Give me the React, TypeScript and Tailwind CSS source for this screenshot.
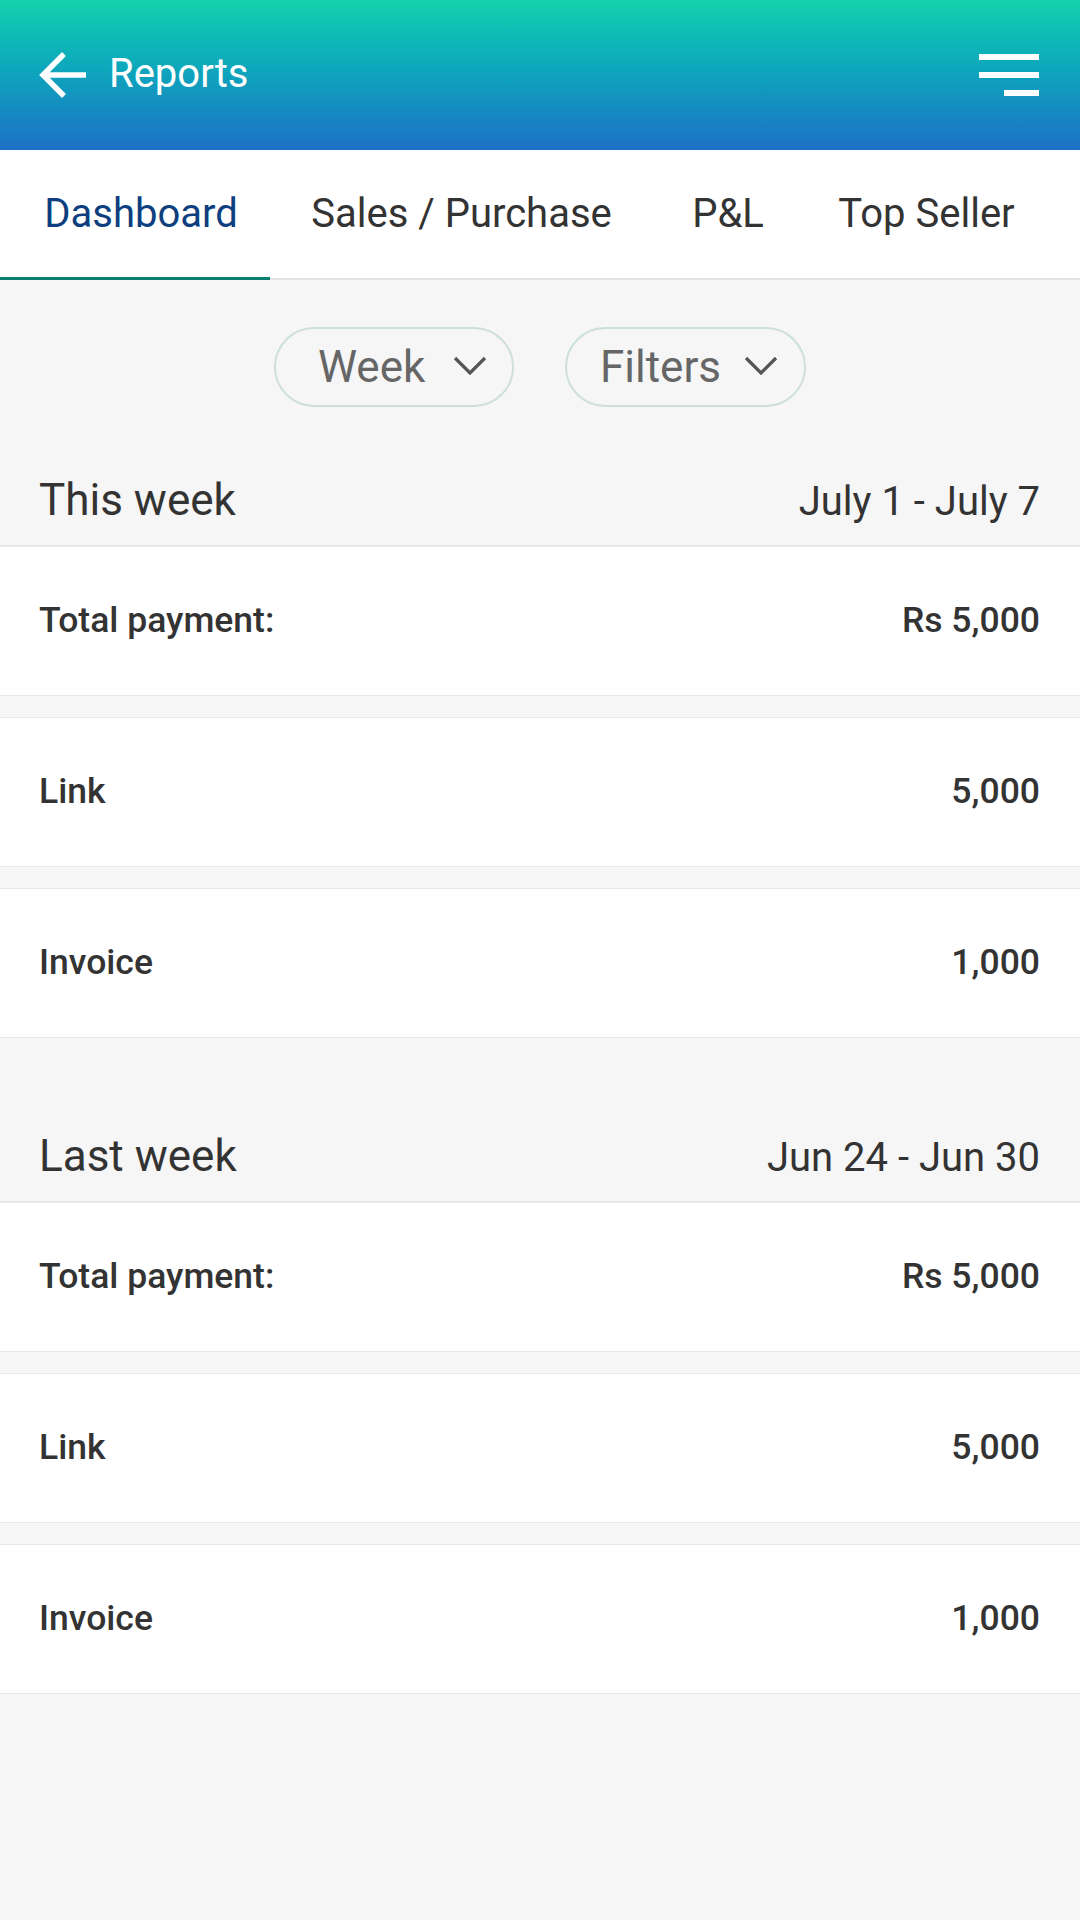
import React from "react";

function Row({ label, value }: { label: string; value: string }) {
  return (
    <div className="h-[150px] bg-white border-y border-[#e9e9e9] flex items-center justify-between pl-[39px] pr-[40px] text-[35.5px] font-medium text-[#333333]">
      <span>{label}</span>
      <span>{value}</span>
    </div>
  );
}

function Section({ title, range, rows, first }: { title: string; range: string; rows: [string, string][]; first?: boolean }) {
  return (
    <div className={first ? "" : "mt-[25px]"}>
      <div className="h-[139px] flex items-end justify-between pl-[39px] pr-[40px] pb-[17px] border-b border-[#e6e6e6]">
        <div className="flex w-full items-baseline justify-between leading-[52px] text-[#333333]">
          <span className="text-[44px]">{title}</span>
          <span className="text-[40px]">{range}</span>
        </div>
      </div>
      <div className="flex flex-col gap-[21px]">
        {rows.map(([l, v], i) => (
          <Row key={i} label={l} value={v} />
        ))}
      </div>
    </div>
  );
}

function Chevron() {
  return (
    <svg width="34" height="20" viewBox="0 0 34 20" fill="none">
      <path d="M2 2 L17 17 L32 2" stroke="#555555" strokeWidth="3.2" />
    </svg>
  );
}

export default function App() {
  const tabs: { label: string; cls: string; active?: boolean }[] = [
    { label: "Dashboard", cls: "w-[270px] pl-[12px]", active: true },
    { label: "Sales / Purchase", cls: "w-[383px]" },
    { label: "P&L", cls: "w-[150px]" },
    { label: "Top Seller", cls: "w-[247px]" },
  ];
  return (
    <div className="w-[1080px] min-h-[1920px] bg-[#f6f6f6]" style={{ fontFamily: "Roboto, 'Noto Sans', sans-serif" }}>
      <header className="h-[150px] bg-gradient-to-b from-[#16d2ad] to-[#1e70c5] flex items-center justify-between pl-[39px] pr-[41px]">
        <div className="flex items-center gap-[22px]">
          <svg width="48" height="48" viewBox="0 0 48 48" fill="none">
            <path d="M47 24 H5" stroke="white" strokeWidth="5.5" />
            <path d="M25 3 L4 24 L25 45" stroke="white" strokeWidth="5.5" />
          </svg>
          <span className="text-white text-[40px] leading-none pb-[2px]">Reports</span>
        </div>
        <svg width="60" height="42" viewBox="0 0 60 42" fill="white">
          <rect x="0" y="0" width="60" height="6" />
          <rect x="0" y="18" width="60" height="6" />
          <rect x="25" y="36" width="35" height="6" />
        </svg>
      </header>
      <nav className="h-[130px] bg-white border-b-2 border-[#e2e2e2] flex">
        {tabs.map((t) => (
          <div key={t.label} className={`${t.cls} shrink-0 relative flex items-center justify-center text-[40px] ${t.active ? "text-[#0d3f80]" : "text-[#333333]"}`}>
            <span>{t.label}</span>
            {t.active && <span className="absolute left-0 right-0 bottom-[-2px] h-[3px] bg-[#0b7f6e]" />}
          </div>
        ))}
      </nav>
      <div className="pt-[47px] flex justify-center gap-[51px]">
        <div className="w-[240px] h-[80px] rounded-full border-2 border-[#cddfd9] flex items-center pl-[42px] text-[44px] text-[#666666]">
          <span className="w-[109px]">Week</span>
          <span className="ml-[26px] pb-[2px]"><Chevron /></span>
        </div>
        <div className="w-[241px] h-[80px] rounded-full border-2 border-[#cddfd9] flex items-center pl-[33px] text-[44px] text-[#666666]">
          <span className="w-[120px]">Filters</span>
          <span className="ml-[24px] pb-[2px]"><Chevron /></span>
        </div>
      </div>
      <Section
        first
        title="This week"
        range="July 1 - July 7"
        rows={[
          ["Total payment:", "Rs 5,000"],
          ["Link", "5,000"],
          ["Invoice", "1,000"],
        ]}
      />
      <Section
        title="Last week"
        range="Jun 24 - Jun 30"
        rows={[
          ["Total payment:", "Rs 5,000"],
          ["Link", "5,000"],
          ["Invoice", "1,000"],
        ]}
      />
    </div>
  );
}
